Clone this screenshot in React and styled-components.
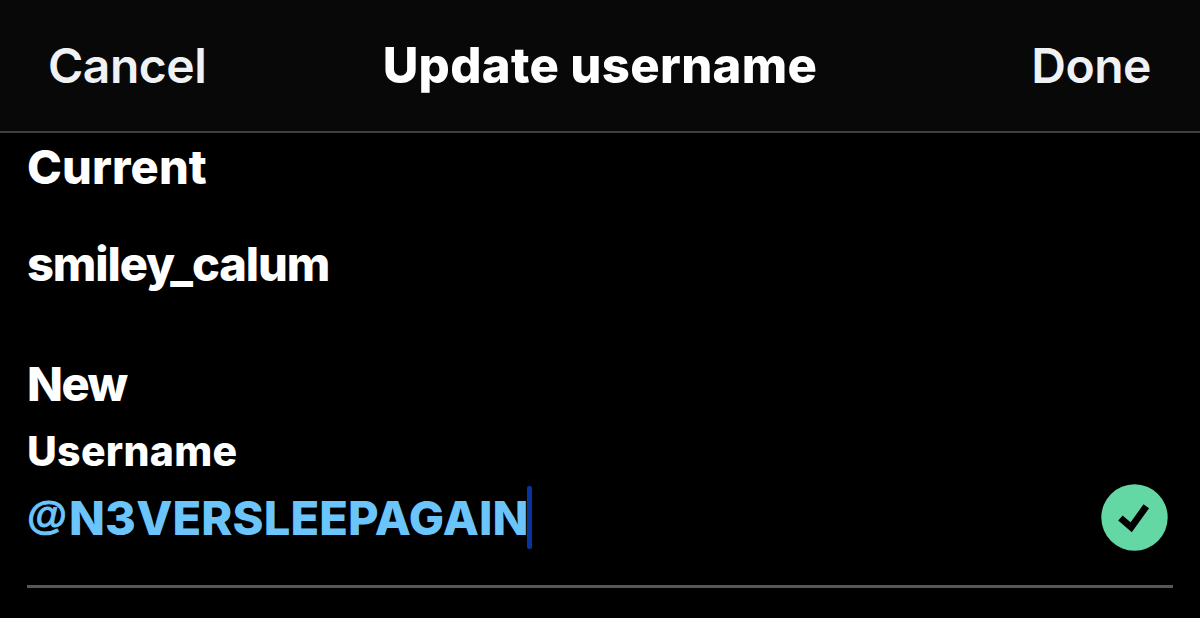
import React from "react";
import styled, { createGlobalStyle } from "styled-components";

const GlobalStyle = createGlobalStyle`
  * { box-sizing: border-box; }
  body {
    margin: 0;
    background: #000;
    color: #fff;
    font-family: Inter, "Liberation Sans", sans-serif;
  }
`;

const Screen = styled.main`
  height: 618px;
  overflow: hidden;
  background: #000;
`;

const NavBar = styled.header`
  display: grid;
  grid-template-columns: 1fr auto 1fr;
  align-items: center;
  height: 133px;
  padding: 0 49px 0 48px;
  background: #080808;
  border-bottom: 2px solid #3f3f3f;
`;

const NavButton = styled.button`
  justify-self: ${(p) => (p.$end ? "end" : "start")};
  padding: 0;
  border: 0;
  background: none;
  color: #eff1f4;
  font: 560 48px/60px Inter, sans-serif;
  letter-spacing: -0.5px;
`;

const Title = styled.h1`
  margin: 1px 0 0 1px;
  font-size: 49px;
  font-weight: 800;
  line-height: 60px;
  letter-spacing: 0.34px;
`;

const Content = styled.section`
  display: flex;
  flex-direction: column;
  padding: 0 27px;
`;

const Text = styled.div`
  margin-top: ${(p) => p.$top || 0}px;
  font-size: ${(p) => p.$size || 47}px;
  font-weight: 800;
  line-height: ${(p) => p.$line || 60}px;
  letter-spacing: ${(p) => p.$track || 0}px;
  white-space: nowrap;
`;

const Field = styled.div`
  display: flex;
  align-items: center;
  justify-content: space-between;
  height: 110px;
  padding: 8px 5px 37px 0;
  border-bottom: 3px solid #55585b;
`;

const Value = styled.div`
  display: flex;
  align-items: center;
  color: #6bc5fb;
  font-size: 47px;
  font-weight: 800;
  line-height: 64px;
  letter-spacing: 0.14px;
`;

const Handle = styled.span`
  padding-top: 2px;
`;

const At = styled.span`
  width: 42px;
  padding-bottom: 3px;
  font: 700 41px/59px "Liberation Sans", sans-serif;
  -webkit-text-stroke: 0.8px currentColor;
`;

const Caret = styled.span`
  width: 5px;
  height: 63px;
  margin-left: -2px;
  border-radius: 2px;
  background: #08349f;
`;

const Badge = styled.svg`
  width: 67px;
  height: 67px;
`;

export default function App() {
  return (
    <Screen>
      <GlobalStyle />
      <NavBar>
        <NavButton>Cancel</NavButton>
        <Title>Update username</Title>
        <NavButton $end>Done</NavButton>
      </NavBar>
      <Content>
        <Text $line={68} $track={0.1}>Current</Text>
        <Text $top={33} $track={-1.1}>smiley_calum</Text>
        <Text $top={60} $track={-1.6}>New</Text>
        <Text $top={10} $size={41} $line={54} $track={0.3}>Username</Text>
        <Field>
          <Value>
            <At>@</At>
            <Handle>N3VERSLEEPAGAIN</Handle>
            <Caret />
          </Value>
          <Badge viewBox="0 0 67 67" aria-label="Available">
            <circle cx="33.5" cy="33.5" r="33.2" fill="#63d8a4" />
            <path d="M19.4 34 L30.2 43.3 L45.3 22.3" fill="none" stroke="#000" strokeWidth="6.8" />
          </Badge>
        </Field>
      </Content>
    </Screen>
  );
}
